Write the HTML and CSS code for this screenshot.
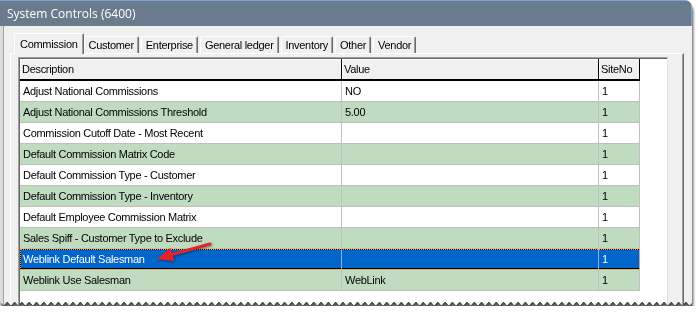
FILE: index.html
```html
<!DOCTYPE html>
<html lang="en">
<head>
  <meta charset="UTF-8">
  <meta name="viewport" content="width=device-width, initial-scale=1.0">
  <title>System Controls</title>
  <link rel="stylesheet" href="styles.css">
</head>
<body>

  <div class="shot">
    <div class="window">
      <div class="titlebar">System Controls (6400)</div>

      <div class="client">
        <div class="tabs">
          <div class="tab tab-active">Commission</div>
          <div class="tab">Customer</div>
          <div class="tab">Enterprise</div>
          <div class="tab">General ledger</div>
          <div class="tab">Inventory</div>
          <div class="tab">Other</div>
          <div class="tab">Vendor</div>
        </div>

        <div class="tab-panel">
          <div class="grid">
            <div class="grid-row grid-head">
              <div class="cell">Description</div>
              <div class="cell">Value</div>
              <div class="cell">SiteNo</div>
            </div>
            <div class="grid-row">
              <div class="cell">Adjust National Commissions</div>
              <div class="cell">NO</div>
              <div class="cell">1</div>
            </div>
            <div class="grid-row row-green">
              <div class="cell">Adjust National Commissions Threshold</div>
              <div class="cell">5.00</div>
              <div class="cell">1</div>
            </div>
            <div class="grid-row">
              <div class="cell">Commission Cutoff Date - Most Recent</div>
              <div class="cell"></div>
              <div class="cell">1</div>
            </div>
            <div class="grid-row row-green">
              <div class="cell">Default Commission Matrix Code</div>
              <div class="cell"></div>
              <div class="cell">1</div>
            </div>
            <div class="grid-row">
              <div class="cell">Default Commission Type - Customer</div>
              <div class="cell"></div>
              <div class="cell">1</div>
            </div>
            <div class="grid-row row-green">
              <div class="cell">Default Commission Type - Inventory</div>
              <div class="cell"></div>
              <div class="cell">1</div>
            </div>
            <div class="grid-row">
              <div class="cell">Default Employee Commission Matrix</div>
              <div class="cell"></div>
              <div class="cell">1</div>
            </div>
            <div class="grid-row row-green">
              <div class="cell">Sales Spiff - Customer Type to Exclude</div>
              <div class="cell"></div>
              <div class="cell">1</div>
            </div>
            <div class="grid-row row-selected">
              <div class="cell">Weblink Default Salesman</div>
              <div class="cell"></div>
              <div class="cell">1</div>
            </div>
            <div class="grid-row row-green">
              <div class="cell">Weblink Use Salesman</div>
              <div class="cell">WebLink</div>
              <div class="cell">1</div>
            </div>
          </div>
        </div>
      </div>

      <!-- callout arrow pointing at the selected row -->
      <svg class="arrow" width="70" height="30" viewBox="0 0 70 30">
        <line x1="21" y1="16.8" x2="60" y2="6" stroke="#e2232a" stroke-width="3" stroke-linecap="round"/>
        <polygon points="7,21 20.5,10 24.5,23" fill="#e2232a"/>
      </svg>
    </div>
  </div>

</body>
</html>
```

FILE: styles.css
```css
* {
  margin: 0;
  padding: 0;
  box-sizing: border-box;
}

html {
  background: #fff;
}

body {
  font-family: "Liberation Sans", Arial, sans-serif;
  font-size: 11px;
  letter-spacing: -0.3px;
  color: #000;
}

/* screenshot clipping with torn bottom edge */
.shot {
  width: 692px;
  filter: drop-shadow(1px 4px 1.5px rgba(0, 0, 0, 0.7));
}

.window {
  position: relative;
  height: 306px;
  overflow: hidden;
  background: #f0f0f0;
  border-top-right-radius: 7px;
  -webkit-mask:
    linear-gradient(#000 0 0) top / 100% calc(100% - 5px) no-repeat,
    conic-gradient(from -36deg at 50% 100%, #000 72deg, #0000 0) left bottom / 7.3px 5px repeat-x;
  mask:
    linear-gradient(#000 0 0) top / 100% calc(100% - 5px) no-repeat,
    conic-gradient(from -36deg at 50% 100%, #000 72deg, #0000 0) left bottom / 7.3px 5px repeat-x;
}

.titlebar {
  height: 26px;
  line-height: 27px;
  padding-left: 7px;
  background: #6a7b8e;
  color: #fff;
  font-family: "Open Sans", "Liberation Sans", sans-serif;
  font-size: 12px;
  letter-spacing: 0;
  box-shadow: inset -2px 2px 0 -1px #7fa3cf;
}

.client {
  padding: 7px 8px 0 7px;
  border-left: 3px solid #dcdcdc;
  box-shadow: inset 1px 0 #a0a0a0;
  height: 280px;
}

/* tabs */
.tabs {
  display: flex;
  align-items: flex-end;
  height: 20px;
  padding-left: 4px;
}

.tab {
  height: 17px;
  line-height: 16px;
  padding: 0 4px;
  margin-right: 2px;
  border: 1px solid;
  border-bottom: 0;
  border-color: #fff #696969 transparent #fff;
  border-radius: 2px 2px 0 0;
  box-shadow: inset -1px 0 #a0a0a0;
  white-space: nowrap;
}

.tab-active {
  position: relative;
  height: 21px;
  line-height: 20px;
  margin-bottom: -1px;
  margin-right: 0;
  padding: 0 5px;
  background: #f0f0f0;
}

.tab-panel {
  height: 260px;
  padding: 3px 0 0 7px;
  border: 1px solid;
  border-bottom: 0;
  border-color: #fff #696969 transparent #fff;
  box-shadow: inset -1px 0 #a0a0a0;
}

/* string grid */
.grid {
  width: 650px;
  height: 300px;
  padding: 1px 0 0 1px;
  background: #fff;
  border-top: 1px solid #a0a0a0;
  border-left: 1px solid #a0a0a0;
  border-right: 1px solid #e3e3e3;
  box-shadow: inset 1px 1px #696969;
}

.grid-row {
  display: grid;
  grid-template-columns: 322px 257px 41px;
  width: 620px;
  border-bottom: 1px solid #c0c0c0;
}

.cell {
  height: 20px;
  line-height: 20px;
  padding-left: 3px;
  border-right: 1px solid #c0c0c0;
  white-space: nowrap;
  overflow: hidden;
}

.grid-head {
  background: #f0f0f0;
  border-bottom: 2px solid #000;
}

.grid-head .cell {
  padding-left: 2px;
  border-right-color: #000;
  box-shadow: inset 1px 1px #fff;
}

.row-green {
  background: #c0dcc0;
}

.row-selected {
  background: #0066cc;
  color: #fff;
  box-shadow: inset 0 0 0 1px #000;
  outline: 1px dotted #f2a03c;
  outline-offset: -1px;
}

.row-selected .cell {
  border-right-color: #8fb0d8;
}

.arrow {
  position: absolute;
  left: 150px;
  top: 238px;
  filter: drop-shadow(1px 1px 1px rgba(0, 0, 0, 0.4));
}
```
